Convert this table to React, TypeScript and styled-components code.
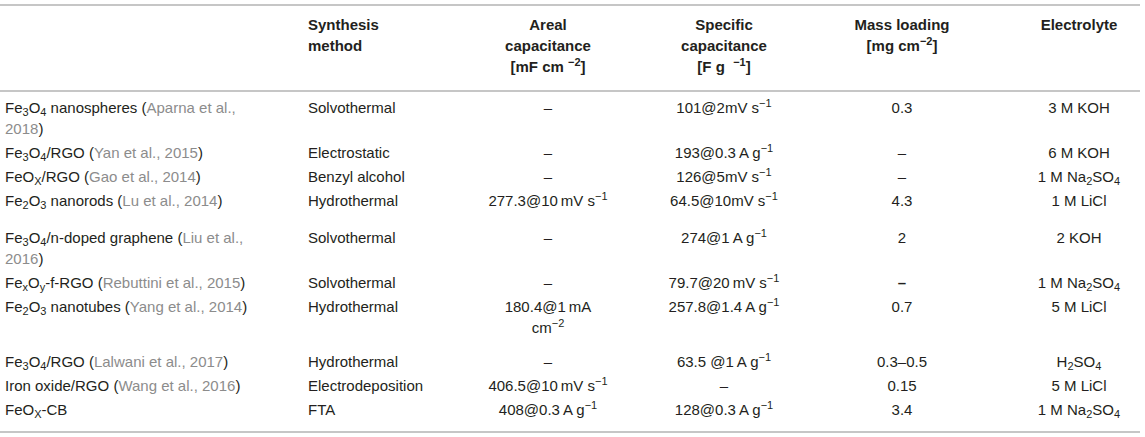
import React from 'react';
import styled, { createGlobalStyle } from 'styled-components';

const GlobalStyle = createGlobalStyle`
    body {
        margin: 0;
        background: white;
        font-family: "Liberation Sans", Arial, sans-serif;
        color: #231f20;
    }
`

const Wrap = styled.div`
    padding-top: 4px;
    width: 1140px;
`

const Table = styled.table`
    width: 1140px;
    border-collapse: collapse;
    table-layout: fixed;
    border-top: 2px solid #c6c6c6;
    border-bottom: 2px solid #c6c6c6;
`

const HeadRow = styled.tr`
    border-bottom: 2px solid #c6c6c6;
`

const HeadCell = styled.th<{ $align?: string }>`
    font-size: 15px;
    font-weight: bold;
    line-height: 21px;
    text-align: ${p => p.$align || 'center'};
    vertical-align: top;
    padding: 8px 6px 13px;
    white-space: nowrap;
`

const Row = styled.tr<{ $extra?: number }>`
    td {
        padding-top: 1.5px;
        padding-bottom: ${p => 1.5 + (p.$extra || 0)}px;
    }
    &:first-child td {
        padding-top: 5px;
    }
`

const Cell = styled.td<{ $align?: string }>`
    font-size: 15px;
    line-height: 21px;
    text-align: ${p => p.$align || 'center'};
    vertical-align: top;
    padding-left: 6px;
    padding-right: 6px;
    white-space: nowrap;

    &:first-child {
        padding-left: 5px;
    }
`

const Cite = styled.span`
    color: #8c8c8c;
`

const Sub = styled.sub`
    font-size: 11px;
    line-height: 0;
    vertical-align: -3px;
`

const Sup = styled.sup`
    font-size: 11px;
    line-height: 0;
    vertical-align: 6px;
`

const Dash = styled.span<{ $heavy?: boolean }>`
    font-weight: ${p => (p.$heavy ? 'bold' : 'normal')};
`

const Na2SO4 = () => <>1 M Na<Sub>2</Sub>SO<Sub>4</Sub></>
const Ag = ({ v }: { v: string }) => <>{v}&#8201;A g<Sup>−1</Sup></>

type RowData = {
    material: React.ReactNode
    method: string
    areal: React.ReactNode
    specific: React.ReactNode
    mass: React.ReactNode
    electrolyte: React.ReactNode
    extra?: number
}

const rows: RowData[] = [
    {
        material: <>Fe<Sub>3</Sub>O<Sub>4</Sub> nanospheres (<Cite>Aparna et al.,</Cite><br /><Cite>2018</Cite>)</>,
        method: 'Solvothermal',
        areal: <Dash>–</Dash>,
        specific: <>101@2mV s<Sup>−1</Sup></>,
        mass: '0.3',
        electrolyte: '3 M KOH',
    },
    {
        material: <>Fe<Sub>3</Sub>O<Sub>4</Sub>/RGO (<Cite>Yan et al., 2015</Cite>)</>,
        method: 'Electrostatic',
        areal: <Dash>–</Dash>,
        specific: <Ag v="193@0.3" />,
        mass: <Dash>–</Dash>,
        electrolyte: '6 M KOH',
    },
    {
        material: <>FeO<Sub>X</Sub>/RGO (<Cite>Gao et al., 2014</Cite>)</>,
        method: 'Benzyl alcohol',
        areal: <Dash>–</Dash>,
        specific: <>126@5mV s<Sup>−1</Sup></>,
        mass: <Dash>–</Dash>,
        electrolyte: <Na2SO4 />,
    },
    {
        material: <>Fe<Sub>2</Sub>O<Sub>3</Sub> nanorods (<Cite>Lu et al., 2014</Cite>)</>,
        method: 'Hydrothermal',
        areal: <>277.3@10&#8201;mV s<Sup>−1</Sup></>,
        specific: <>64.5@10mV s<Sup>−1</Sup></>,
        mass: '4.3',
        electrolyte: '1 M LiCl',
        extra: 13,
    },
    {
        material: <>Fe<Sub>3</Sub>O<Sub>4</Sub>/n-doped graphene (<Cite>Liu et al.,</Cite><br /><Cite>2016</Cite>)</>,
        method: 'Solvothermal',
        areal: <Dash>–</Dash>,
        specific: <Ag v="274@1" />,
        mass: '2',
        electrolyte: '2 KOH',
    },
    {
        material: <>Fe<Sub>x</Sub>O<Sub>y</Sub>-f-RGO (<Cite>Rebuttini et al., 2015</Cite>)</>,
        method: 'Solvothermal',
        areal: <Dash>–</Dash>,
        specific: <>79.7@20&#8201;mV s<Sup>−1</Sup></>,
        mass: <Dash $heavy>–</Dash>,
        electrolyte: <Na2SO4 />,
    },
    {
        material: <>Fe<Sub>2</Sub>O<Sub>3</Sub> nanotubes (<Cite>Yang et al., 2014</Cite>)</>,
        method: 'Hydrothermal',
        areal: <>180.4@1&#8201;mA<br />cm<Sup>−2</Sup></>,
        specific: <Ag v="257.8@1.4" />,
        mass: '0.7',
        electrolyte: '5 M LiCl',
        extra: 10,
    },
    {
        material: <>Fe<Sub>3</Sub>O<Sub>4</Sub>/RGO (<Cite>Lalwani et al., 2017</Cite>)</>,
        method: 'Hydrothermal',
        areal: <Dash>–</Dash>,
        specific: <Ag v="63.5 @1" />,
        mass: '0.3–0.5',
        electrolyte: <>H<Sub>2</Sub>SO<Sub>4</Sub></>,
    },
    {
        material: <>Iron oxide/RGO (<Cite>Wang et al., 2016</Cite>)</>,
        method: 'Electrodeposition',
        areal: <>406.5@10&#8201;mV s<Sup>−1</Sup></>,
        specific: <Dash>–</Dash>,
        mass: '0.15',
        electrolyte: '5 M LiCl',
    },
    {
        material: <>FeO<Sub>X</Sub>-CB</>,
        method: 'FTA',
        areal: <Ag v="408@0.3" />,
        specific: <Ag v="128@0.3" />,
        mass: '3.4',
        electrolyte: <Na2SO4 />,
        extra: 9,
    },
]

const App = () => {
    return (
        <Wrap>
            <GlobalStyle />
            <Table>
                <colgroup>
                    <col style={{ width: 302 }} />
                    <col style={{ width: 132 }} />
                    <col style={{ width: 228 }} />
                    <col style={{ width: 124 }} />
                    <col style={{ width: 232 }} />
                    <col style={{ width: 122 }} />
                </colgroup>
                <thead>
                    <HeadRow>
                        <HeadCell $align="left"></HeadCell>
                        <HeadCell $align="left">Synthesis<br />method</HeadCell>
                        <HeadCell>Areal<br />capacitance<br />[mF cm <Sup>−2</Sup>]</HeadCell>
                        <HeadCell>Specific<br />capacitance<br />[F g &nbsp;<Sup>−1</Sup>]</HeadCell>
                        <HeadCell>Mass loading<br />[mg cm<Sup>−2</Sup>]</HeadCell>
                        <HeadCell>Electrolyte</HeadCell>
                    </HeadRow>
                </thead>
                <tbody>
                    {rows.map((r, i) => (
                        <Row key={i} $extra={r.extra}>
                            <Cell $align="left">{r.material}</Cell>
                            <Cell $align="left">{r.method}</Cell>
                            <Cell>{r.areal}</Cell>
                            <Cell>{r.specific}</Cell>
                            <Cell>{r.mass}</Cell>
                            <Cell>{r.electrolyte}</Cell>
                        </Row>
                    ))}
                </tbody>
            </Table>
        </Wrap>
    )
}

export default App
